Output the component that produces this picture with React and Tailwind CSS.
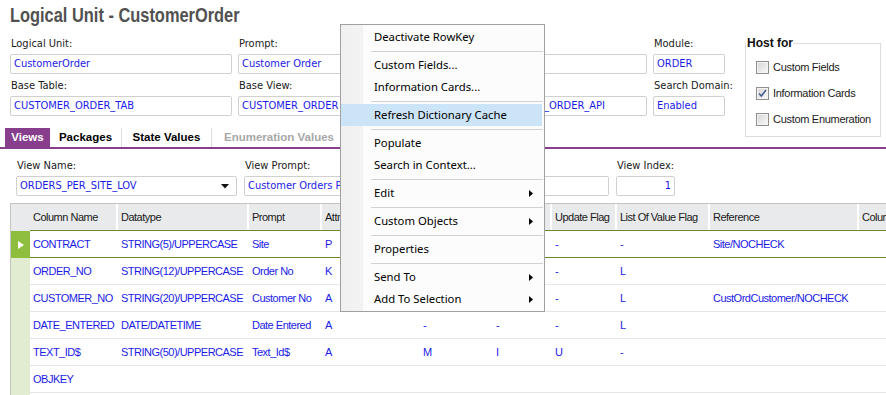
import React from 'react';

const tahoma = "font-['DejaVu_Sans_Condensed','Liberation_Sans',Arial,sans-serif]";

const rows = [
  { name: 'CONTRACT', type: 'STRING(5)/UPPERCASE', prompt: 'Site', att: 'P', m: 'M', i: 'I', u: '-', l: '-', ref: 'Site/NOCHECK', sel: true },
  { name: 'ORDER_NO', type: 'STRING(12)/UPPERCASE', prompt: 'Order No', att: 'K', m: 'M', i: 'I', u: '-', l: 'L', ref: '' },
  { name: 'CUSTOMER_NO', type: 'STRING(20)/UPPERCASE', prompt: 'Customer No', att: 'A', m: 'M', i: 'I', u: '-', l: 'L', ref: 'CustOrdCustomer/NOCHECK' },
  { name: 'DATE_ENTERED', type: 'DATE/DATETIME', prompt: 'Date Entered', att: 'A', m: '-', i: '-', u: '-', l: 'L', ref: '' },
  { name: 'TEXT_ID$', type: 'STRING(50)/UPPERCASE', prompt: 'Text_Id$', att: 'A', m: 'M', i: 'I', u: 'U', l: '-', ref: '' },
  { name: 'OBJKEY' },
  {},
];

const cols = [
  { key: 'name', title: 'Column Name', w: 'w-[88px]' },
  { key: 'type', title: 'Datatype', w: 'w-[131px]' },
  { key: 'prompt', title: 'Prompt', w: 'w-[73px]' },
  { key: 'att', title: 'Attribute', w: 'w-[98px]' },
  { key: 'm', title: 'Mandatory', w: 'w-[73px]' },
  { key: 'i', title: 'Insert Flag', w: 'w-[59px]' },
  { key: 'u', title: 'Update Flag', w: 'w-[65px]' },
  { key: 'l', title: 'List Of Value Flag', w: 'w-[93px]' },
  { key: 'ref', title: 'Reference', w: 'w-[149px]' },
  { key: 'col', title: 'Column Type', w: 'w-[150px]' },
];

// champ avec libellé + zone de saisie
function Field({ label, value, w, right, drop }) {
  return (
    <div className={`flex flex-col shrink-0 ${w}`}>
      <div className="h-[19px] leading-[17px] pl-[1px] text-[#1a1a1a] whitespace-nowrap">{label}</div>
      <div className={`h-[20px] border border-[#d0d0d0] rounded-[2px] px-[3px] flex items-center text-[#1b1be8] whitespace-nowrap overflow-hidden ${right ? 'justify-end' : 'justify-between'}`}>
        <span>{value}</span>
        {drop && (
          <svg width="8" height="5" viewBox="0 0 8 5" className="mr-[4px]">
            <path d="M0 0h8L4 4.5z" fill="#111" />
          </svg>
        )}
      </div>
    </div>
  );
}

function Check({ label, checked }) {
  return (
    <div className="h-[26px] flex items-center pl-[10px] whitespace-nowrap">
      <span className="w-[13px] h-[13px] shrink-0 border border-[#8f8f8f] flex items-center justify-center">
        <span className="w-[11px] h-[11px] border border-[#f4f4f4] bg-gradient-to-br from-[#d8d8d8] to-[#f7f7f7] flex items-center justify-center">
          {checked && (
            <svg width="9" height="9" viewBox="0 0 9 9">
              <path d="M1 4.5l2.3 2.6L8 1" stroke="#4a5f8f" strokeWidth="1.6" fill="none" />
            </svg>
          )}
        </span>
      </span>
      <span className="ml-[4px] text-[11px] tracking-[-0.3px] text-[#1a1a1a]">{label}</span>
    </div>
  );
}

function MenuItem({ label, hot, sub }) {
  return (
    <div className={`h-[22px] mr-[2px] flex items-center justify-between pl-[33px] pr-[9px] ${hot ? 'bg-[#cce4f7]' : ''}`}>
      <span>{label}</span>
      {sub && (
        <svg width="4" height="7" viewBox="0 0 4 7">
          <path d="M0 0l4 3.5L0 7z" fill="#000" />
        </svg>
      )}
    </div>
  );
}

function Sep() {
  return (
    <div className="h-[6px] flex items-center ml-[30px] mr-[1px]">
      <div className="h-[1px] w-full bg-[#d2d2d2]" />
    </div>
  );
}

export default function App() {
  return (
    <div className={`relative w-[886px] h-[395px] overflow-hidden bg-white text-[11px] ${tahoma}`}>
      {/* Titre */}
      <div className="h-[35px] pt-[5px] pl-[10px]">
        <h1 className="inline-block origin-left scale-x-[0.82] text-[20px] leading-[20px] font-bold text-[#515151] font-['Liberation_Sans',Arial,sans-serif] whitespace-nowrap">
          Logical Unit - CustomerOrder
        </h1>
      </div>

      {/* Champs + Host for */}
      <div className="flex items-start h-[112px]">
        <div className="w-[724px] shrink-0 flex flex-col">
          <div className="flex flex-col gap-[3px] pl-[10px]">
            <div className="flex gap-[6px]">
              <Field label="Logical Unit:" value="CustomerOrder" w="w-[222px]" />
              <Field label="Prompt:" value="Customer Order" w="w-[240px]" />
              <Field label="Prefix:" value="" w="w-[163px]" />
              <Field label="Module:" value="ORDER" w="w-[72px]" />
            </div>
            <div className="flex gap-[6px]">
              <Field label="Base Table:" value="CUSTOMER_ORDER_TAB" w="w-[222px]" />
              <Field label="Base View:" value="CUSTOMER_ORDER" w="w-[240px]" />
              <Field label="Package:" value="CUSTOMER_ORDER_API" w="w-[163px]" />
              <Field label="Search Domain:" value="Enabled" w="w-[72px]" />
            </div>
          </div>
          <div className="flex h-[19px] mt-[12px] ml-[5px] font-bold text-[11.5px] font-['Liberation_Sans',Arial,sans-serif]">
            <div className="w-[45px] bg-[#873e8c] text-white flex items-center justify-center">Views</div>
            <div className="w-[72px] border-r border-[#dedede] text-black flex items-center justify-center">Packages</div>
            <div className="w-[90px] border-r border-[#dedede] text-black flex items-center justify-center">State Values</div>
            <div className="w-[135px] border-r border-[#dedede] text-[#a8a8a8] flex items-center justify-center">Enumeration Values</div>
          </div>
        </div>
        <fieldset className="ml-[21px] w-[136px] border border-[#dcdcdc] pt-[3px] pb-[4px] font-['Liberation_Sans',Arial,sans-serif]">
          <legend className="h-[16px] leading-[16px] px-[1px] font-bold text-[12px] text-[#111]">Host for</legend>
          <Check label="Custom Fields" />
          <Check label="Information Cards" checked />
          <Check label="Custom Enumeration" />
        </fieldset>
      </div>
      <div className="h-[2px] bg-[#873e8c]" />

      {/* Champs de la vue */}
      <div className="flex gap-[7px] pl-[16px] pt-[8px]">
        <Field label="View Name:" value="ORDERS_PER_SITE_LOV" w="w-[221px]" drop />
        <Field label="View Prompt:" value="Customer Orders Per Site" w="w-[200px]" />
        <Field label="View Type:" value="" w="w-[158px]" />
        <Field label="View Index:" value="1" w="w-[59px]" right />
      </div>

      {/* Grille */}
      <div className="mt-[7px] ml-[10px] border-t border-l border-[#c4c4c4] tracking-[-0.5px] font-['Liberation_Sans',Arial,sans-serif]">
        <div className="flex h-[27px] bg-[#e9eaeb]">
          <div className="w-[19px] shrink-0" />
          <div className="flex flex-1 border-b border-[#6d8a26] overflow-hidden">
            {cols.map((c) => (
              <div key={c.key} className={`${c.w} shrink-0 border-r-2 border-white pl-[3px] flex items-center whitespace-nowrap overflow-hidden text-[#1a1a1a]`}>
                {c.title}
              </div>
            ))}
          </div>
        </div>
        {rows.map((r, idx) => (
          <div key={idx} className="flex h-[27px]">
            <div className={`w-[19px] shrink-0 flex items-center justify-center ${r.sel ? 'bg-[#8dbe3e]' : 'bg-[#e2ecd1]'}`}>
              {r.sel && (
                <svg width="6" height="8" viewBox="0 0 6 8">
                  <path d="M0 0l6 4-6 4z" fill="#fff" />
                </svg>
              )}
            </div>
            <div className={`flex flex-1 border-b overflow-hidden ${r.sel ? 'border-[#6d8a26]' : 'border-[#e6e6e6]'}`}>
              {cols.map((c) => (
                <div key={c.key} className={`${c.w} shrink-0 pl-[3px] flex items-center whitespace-nowrap overflow-hidden text-[#1b1be8]`}>
                  {r[c.key] || ''}
                </div>
              ))}
            </div>
          </div>
        ))}
      </div>

      {/* Menu contextuel */}
      <div className="absolute left-[340px] top-[24px] w-[205px] border border-[#a0a0a0] py-[1px] bg-[linear-gradient(to_right,#f0f0f0_0px,#f3f3f3_22px,#fcfcfc_22px)] text-[11.3px] text-black font-['Noto_Sans','Liberation_Sans',sans-serif]">
        <MenuItem label="Deactivate RowKey" />
        <Sep />
        <MenuItem label="Custom Fields..." />
        <MenuItem label="Information Cards..." />
        <Sep />
        <MenuItem label="Refresh Dictionary Cache" hot />
        <Sep />
        <MenuItem label="Populate" />
        <MenuItem label="Search in Context..." />
        <Sep />
        <MenuItem label="Edit" sub />
        <Sep />
        <MenuItem label="Custom Objects" sub />
        <Sep />
        <MenuItem label="Properties" />
        <Sep />
        <MenuItem label="Send To" sub />
        <MenuItem label="Add To Selection" sub />
      </div>
    </div>
  );
}
